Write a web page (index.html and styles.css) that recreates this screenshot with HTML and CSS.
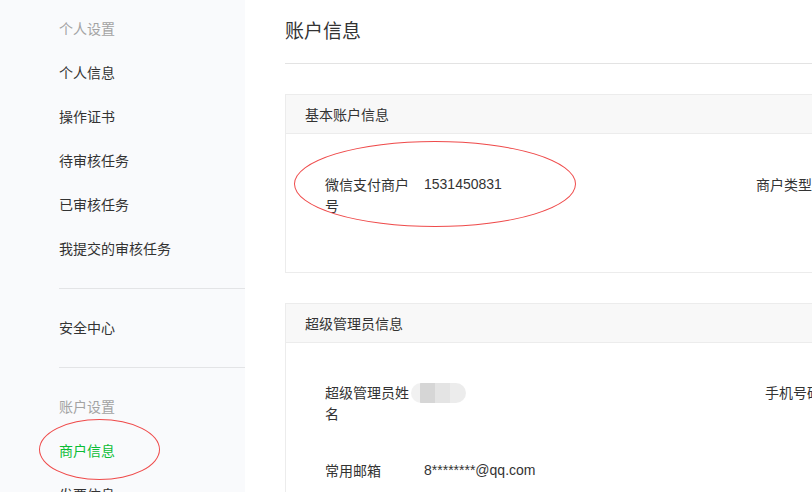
FILE: index.html
```html
<!DOCTYPE html>
<html lang="zh-CN">
<head>
    <meta charset="UTF-8">
    <meta name="viewport" content="width=device-width, initial-scale=1.0">
    <title>账户信息</title>
    <link rel="stylesheet" href="styles.css">
</head>
<body>

    <div id="pagina">
        <div id="menu">
            <div class="grupo">
                <div class="titulo-grupo">个人设置</div>
                <div class="item">个人信息</div>
                <div class="item">操作证书</div>
                <div class="item">待审核任务</div>
                <div class="item">已审核任务</div>
                <div class="item">我提交的审核任务</div>
            </div>
            <div class="grupo">
                <div class="item">安全中心</div>
            </div>
            <div class="grupo sin-linea">
                <div class="titulo-grupo">账户设置</div>
                <div class="item activo">
                    商户信息
                    <span class="marca marca-menu"></span>
                </div>
                <div class="item">发票信息</div>
            </div>
        </div>

        <div id="principal">
            <h1 class="titulo">账户信息</h1>

            <div class="tarjeta">
                <div class="cabecera">基本账户信息</div>
                <div class="cuerpo cuerpo-basico">
                    <div class="fila">
                        <div class="campo campo-basico">
                            <span class="etiqueta">微信支付商户号</span>
                            <span class="valor">1531450831</span>
                        </div>
                        <div class="campo campo-derecho">
                            <span class="etiqueta">商户类型</span>
                        </div>
                    </div>
                    <span class="marca marca-numero"></span>
                </div>
            </div>

            <div class="tarjeta">
                <div class="cabecera">超级管理员信息</div>
                <div class="cuerpo">
                    <div class="fila">
                        <div class="campo campo-admin">
                            <span class="etiqueta">超级管理员姓名</span>
                            <span class="valor"><span class="borroso"></span></span>
                        </div>
                        <div class="campo campo-derecho">
                            <span class="etiqueta">手机号码</span>
                        </div>
                    </div>
                    <div class="fila fila-correo">
                        <div class="campo campo-admin">
                            <span class="etiqueta">常用邮箱</span>
                            <span class="valor">8********@qq.com</span>
                        </div>
                    </div>
                </div>
            </div>
        </div>
    </div>

</body>
</html>
```

FILE: styles.css
```css
html, body {
    margin: 0;
    height: 100%;
    overflow: hidden;
}

body {
    font-family: "Noto Sans CJK SC", "Liberation Sans", sans-serif;
    font-size: 14px;
    color: #333;
    background-color: #fff;
}

#pagina {
    display: flex;
    height: 100%;
}

#menu {
    width: 245px;
    flex-shrink: 0;
    background-color: #f9fafc;
    padding-top: 6px;
    box-sizing: border-box;
}

.grupo {
    margin-left: 59px;
    padding: 16px 0 18px;
    border-bottom: 1px solid #e3e4e6;
}

.grupo:first-child {
    padding-top: 0;
}

.grupo.sin-linea {
    border-bottom: none;
}

.titulo-grupo,
.item {
    height: 44px;
    line-height: 44px;
    white-space: nowrap;
}

.titulo-grupo {
    color: #a3a3a3;
}

.item {
    position: relative;
    color: #333;
}

.item.activo {
    color: #0bbd35;
}

#principal {
    flex: 1;
    padding-left: 40px;
    min-width: 0;
}

.titulo {
    margin: 0;
    width: 760px;
    height: 64px;
    line-height: 60px;
    font-size: 19px;
    font-weight: normal;
    color: #333;
    border-bottom: 1px solid #e3e3e3;
    box-sizing: border-box;
}

.tarjeta {
    width: 760px;
    margin-top: 30px;
    border: 1px solid #ececec;
}

.cabecera {
    height: 38px;
    line-height: 38px;
    padding-left: 19px;
    background-color: #f8f8f8;
    border-bottom: 1px solid #ececec;
}

.cuerpo {
    position: relative;
    padding: 39px 0 36px 39px;
}

.cuerpo-basico {
    padding-top: 40px;
    padding-bottom: 56px;
}

.fila {
    display: flex;
    margin-bottom: 34px;
}

.fila:last-of-type {
    margin-bottom: 0;
}

.campo {
    display: flex;
    align-items: flex-start;
    line-height: 21px;
}

.campo-basico {
    width: 431px;
}

.campo-admin {
    width: 440px;
}

.etiqueta {
    width: 86px;
    padding-right: 13px;
    flex-shrink: 0;
}

.campo-derecho .etiqueta {
    width: auto;
    white-space: nowrap;
}

.fila-correo {
    padding-top: 2px;
}

.valor {
    font-family: "Liberation Sans", Arial, sans-serif;
}

.borroso {
    display: inline-block;
    width: 55px;
    height: 20px;
    margin-left: -13px;
    margin-top: 1px;
    border-radius: 10px;
    vertical-align: top;
    background: linear-gradient(to right, #f1f1f1 0 9px, #d6d6d6 9px 24px, #e4e4e4 24px 39px, #ececec 39px);
}

.marca {
    position: absolute;
    border: 1px solid #ef4b4b;
    border-radius: 50%;
    pointer-events: none;
}

.marca-numero {
    left: 8px;
    top: 7px;
    width: 280px;
    height: 84px;
}

.marca-menu {
    left: -20px;
    top: -9px;
    width: 119px;
    height: 59px;
}
```
